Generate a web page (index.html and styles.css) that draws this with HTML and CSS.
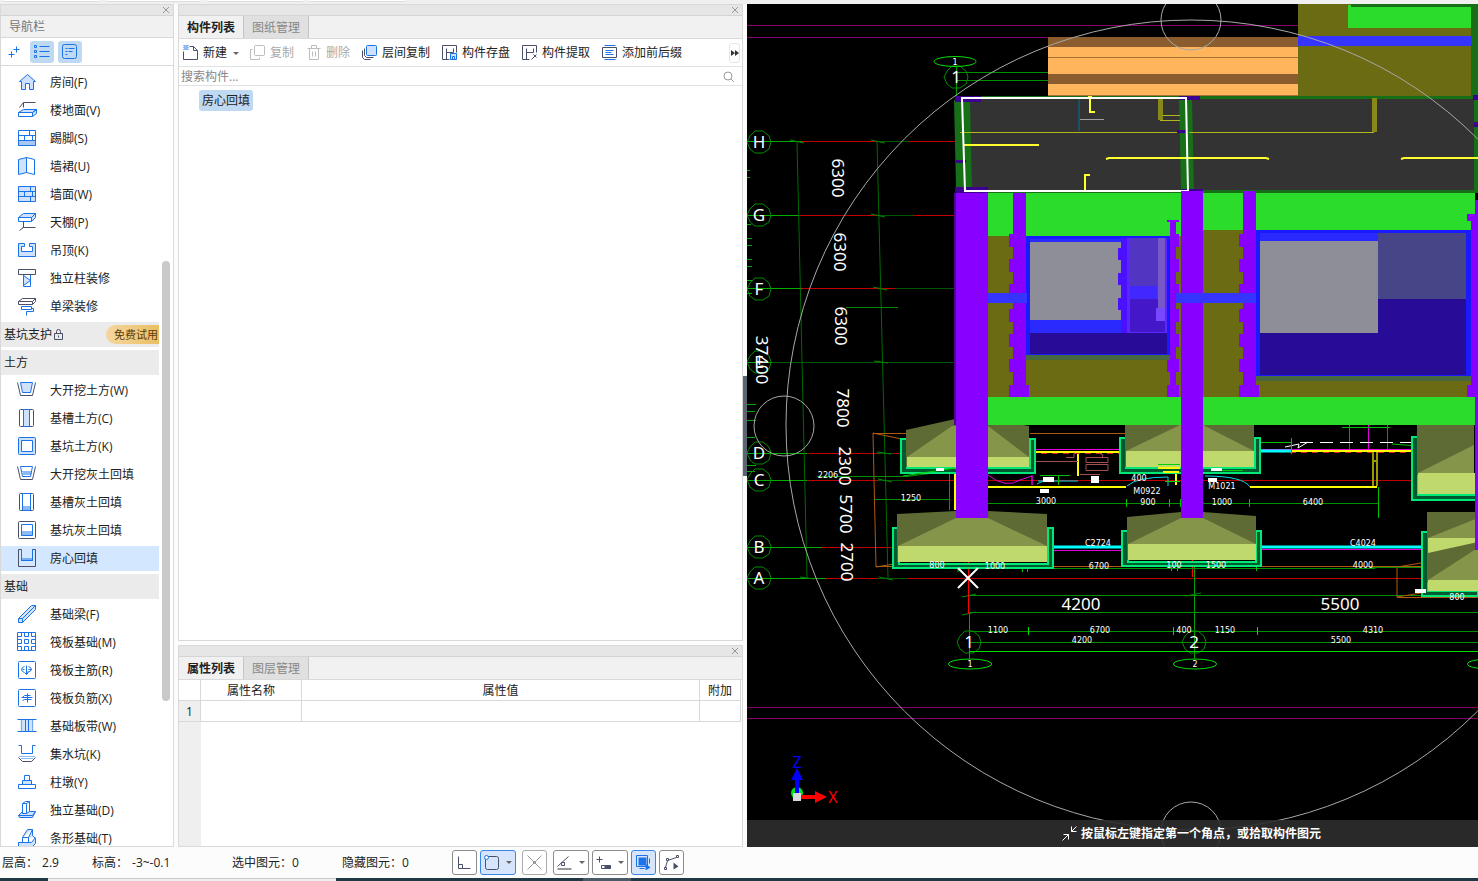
FILE: index.html
```html
<!DOCTYPE html>
<html lang="zh-CN">
<head>
    <meta charset="UTF-8">
    <meta name="viewport" content="width=device-width, initial-scale=1.0">
    <title>房心回填</title>
    <link rel="stylesheet" href="styles.css">
</head>
<body>
    <div class="ribbon-edge">
        <span class="ribbon-group"></span>
        <span class="ribbon-group"></span>
        <span class="ribbon-group"></span>
        <span class="ribbon-group"></span>
    </div>

    <div class="workspace">
        <aside class="panel nav">
            <div class="panel-bar"><button class="close" aria-label="关闭导航栏"><svg width="8" height="8" viewBox="0 0 8 8"><path d="M1 1l6 6M7 1l-6 6"/></svg></button></div>
            <h2 class="nav-title">导航栏</h2>
            <div class="nav-tools">
                <button class="nav-tool" aria-label="展开"><svg width="16" height="16" viewBox="-.5 -.5 16 16"><path class="b" d="M10 2v6M7 5h6M5 7v6M2 10h6"/></svg></button>
                <button class="nav-tool on" aria-label="列表"><svg width="18" height="16" viewBox="-.5 -.5 18 16"><path class="b" d="M6 2h10M6 7h10M6 12h10"/><path class="b" d="M1 1h2v2H1zM1 6h2v2H1zM1 11h2v2H1z"/></svg></button>
                <button class="nav-tool on" aria-label="详情"><svg width="16" height="16" viewBox="-.5 -.5 16 16"><rect class="b" x="0" y="0" width="14" height="14" rx="2"/><path class="b" d="M3 4h2M6 4h6M3 7h2M6 7h4M3 10h2"/></svg></button>
            </div>
            <div class="nav-body">
                <ul class="nav-list">
                    <li><button class="nav-item"><svg viewBox="-.5 -.5 20 21"><path class="bf" d="M2 9l8-7 8 7h-2v8h-4v-6H8v6H4V9z"/></svg>房间(F)</button></li>
                    <li><button class="nav-item"><svg viewBox="-.5 -.5 20 21"><path class="d" d="M2 7l4-5h12M6 2v5"/><path class="bf" d="M1 12l5-3h13l-4 3zM15 12l4-3v4l-4 3z"/><path class="bw" d="M1 12h14v4H1z"/></svg>楼地面(V)</button></li>
                    <li><button class="nav-item"><svg viewBox="-.5 -.5 20 21"><path class="bw" d="M1 2h17v15H1z"/><path class="bd" d="M1 12h17v5H1z"/><path class="b" d="M1 7h17M12 2v5M7 7v5M15 7v5"/></svg>踢脚(S)</button></li>
                    <li><button class="nav-item"><svg viewBox="-.5 -.5 20 21"><path class="bf" d="M1 3l8-2v15l-8 2z"/><path class="bw" d="M9 1l8 2v15l-8-2z"/></svg>墙裙(U)</button></li>
                    <li><button class="nav-item"><svg viewBox="-.5 -.5 20 21"><path class="bf" d="M1 2h17v15H1z"/><path class="b" d="M1 7h17M1 12h17M13 2v5M7 7v5M15 7v5M13 12v5"/></svg>墙面(W)</button></li>
                    <li><button class="nav-item"><svg viewBox="-.5 -.5 20 21"><path class="bf" d="M1 5l5-4h12l-4 4zM14 5l4-4v4l-4 4z"/><path class="bw" d="M1 5h13v4H1z"/><path class="d" d="M6 9v6l-4 3M5 15h13"/></svg>天棚(P)</button></li>
                    <li><button class="nav-item"><svg viewBox="-.5 -.5 20 21"><path class="bf" d="M1 3h6v3H4v5h11V6h-3V3h6v13H1z"/></svg>吊顶(K)</button></li>
                    <li><button class="nav-item"><svg viewBox="-.5 -.5 20 21"><path class="b" d="M6 6h7v12H6z"/><path class="bf" d="M6 7l7 5-7 5z"/><path class="d" d="M1 1h17v5H1z"/></svg>独立柱装修</button></li>
                    <li><button class="nav-item"><svg viewBox="-.5 -.5 20 21"><path class="d" d="M1 5l4-3h13l-3 3zM1 5v3h14l3-3V2M15 5v3"/><path class="b" d="M4 10h10v3H4zM14 12h2v3H9v4"/></svg>单梁装修</button></li>
                    <li class="nav-group">基坑支护<svg width="12" height="14" viewBox="-.5 -.5 12 14"><path class="d" d="M2 5h8v6H2zM4 5V3q0-2 2-2t2 2v2M6 7v2"/></svg><a class="trial" href="#trial">免费试用</a></li>
                    <li class="nav-group">土方</li>
                    <li><button class="nav-item"><svg viewBox="-.5 -.5 20 21"><path class="d" d="M0 2l3 13h12l3-13"/><path class="bf" d="M3 2h12l-2 10H5z"/></svg>大开挖土方(W)</button></li>
                    <li><button class="nav-item"><svg viewBox="-.5 -.5 20 21"><rect class="d" x="2" y="1" width="14" height="17" rx="1"/><path class="bf" d="M6 1h6v17H6z"/></svg>基槽土方(C)</button></li>
                    <li><button class="nav-item"><svg viewBox="-.5 -.5 20 21"><rect class="bf" x="1" y="1" width="17" height="17" rx="1"/><path class="bw" d="M4 4h11v11H4z"/></svg>基坑土方(K)</button></li>
                    <li><button class="nav-item"><svg viewBox="-.5 -.5 20 21"><path class="d" d="M0 2l3 13h12l3-13"/><path class="b" d="M3 2h12l-2 10H5z"/><path class="dots" d="M5 7h9M6 8h8M5 9h9M6 10h7"/></svg>大开挖灰土回填</button></li>
                    <li><button class="nav-item"><svg viewBox="-.5 -.5 20 21"><rect class="d" x="2" y="1" width="14" height="17" rx="1"/><path class="b" d="M5 1h8v17H5z"/><path class="dots" d="M6 14h7M5 15h8M6 16h7M5 17h8"/></svg>基槽灰土回填</button></li>
                    <li><button class="nav-item"><svg viewBox="-.5 -.5 20 21"><rect class="d" x="1" y="1" width="17" height="17" rx="1"/><path class="b" d="M4 4h11v11H4z"/><path class="dots" d="M5 11h10M4 12h11M5 13h10M4 14h11"/></svg>基坑灰土回填</button></li>
                    <li><button class="nav-item selected"><svg viewBox="-.5 -.5 20 21"><path class="d" d="M1 1h3v11h11V1h3v17H1z"/><path class="b" d="M4 1v11h11V1"/><path class="dots" d="M5 10h10M4 11h11"/></svg>房心回填</button></li>
                    <li class="nav-group">基础</li>
                    <li><button class="nav-item"><svg viewBox="-.5 -.5 20 21"><path class="bf" d="M1 14L14 1h4v4L5 18H1z"/><path class="b" d="M1 14h4v4M5 14L18 1"/></svg>基础梁(F)</button></li>
                    <li><button class="nav-item"><svg viewBox="-.5 -.5 20 21"><path class="bw" d="M0 0h18v18H0z"/><path class="b" d="M0 4h4V0M7 0v4h4V0M14 0v4h4M0 7h4v4H0M7 7h4v4H7zM18 7h-4v4h4M0 14h4v4M7 18v-4h4v4M14 18v-4h4"/></svg>筏板基础(M)</button></li>
                    <li><button class="nav-item"><svg viewBox="-.5 -.5 20 21"><rect class="b" x="1" y="1" width="17" height="17" rx="1"/><path class="b" d="M9 5v9M7 6q-3 1-3 3t3 3M11 6q3 1 3 3t-5 3M5 9h2M11 9h3M7 12l2 2 2-2"/></svg>筏板主筋(R)</button></li>
                    <li><button class="nav-item"><svg viewBox="-.5 -.5 20 21"><rect class="b" x="1" y="1" width="17" height="17" rx="1"/><path class="b" d="M10 5v9M5 9l2-2h6M4 9h11M5 12l2-1h7"/></svg>筏板负筋(X)</button></li>
                    <li><button class="nav-item"><svg viewBox="-.5 -.5 20 21"><path class="fill" d="M3 3h13v12H3z"/><path class="b" d="M0 3h19M0 15h19M8 3v12M11 3v12"/><path class="dots" d="M4 3v12M15 3v12"/></svg>基础板带(W)</button></li>
                    <li><button class="nav-item"><svg viewBox="-.5 -.5 20 21"><path class="b" d="M1 1h3v8h11V1h3"/><path class="dots" d="M2 12h15M4 14h12"/><path class="d" d="M1 13l4 4h9l4-4"/></svg>集水坑(K)</button></li>
                    <li><button class="nav-item"><svg viewBox="-.5 -.5 20 21"><path class="bw" d="M7 3h5v5H7zM1 12h17v4H1z"/><path class="bf" d="M5 8h9v4H5z"/></svg>柱墩(Y)</button></li>
                    <li><button class="nav-item"><svg viewBox="-.5 -.5 20 21"><path class="bf" d="M1 15l4-4h13l-3 6H2zM15 15l3-4M1 15h14"/><path class="bw" d="M5 3l3-2h4v10l-3 2H5zM5 3h4v10M9 3l3-2"/></svg>独立基础(D)</button></li>
                    <li><button class="nav-item"><svg viewBox="-.5 -.5 20 21"><path class="bf" d="M5 9l5-8h5v6l3 3v5l-4 4H1v-5h13l4-5M5 9h6l4-8M5 9v5M11 9v5"/></svg>条形基础(T)</button></li>
                </ul>
                <div class="scroll-thumb"></div>
            </div>
        </aside>

        <main class="center">
            <section class="panel components">
                <div class="panel-bar"><button class="close" aria-label="关闭构件列表"><svg width="8" height="8" viewBox="0 0 8 8"><path d="M1 1l6 6M7 1l-6 6"/></svg></button></div>
                <div class="tabs">
                    <button class="tab active">构件列表</button>
                    <button class="tab">图纸管理</button>
                </div>
                <div class="toolbar">
                    <button class="tool"><svg width="16" height="16" viewBox="-.5 -.5 16 16"><path class="d" d="M0 6v8h14V5l-4-4H6M10 1v4h4"/><path class="dots" d="M0 0h5M1 1h4M0 2h5M1 3h4M0 4h5"/></svg>新建<span class="caret"></span></button>
                    <button class="tool" disabled><svg width="16" height="16" viewBox="-.5 -.5 16 16"><rect class="g" x="4" y="0" width="10" height="10" rx="1"/><path class="g" d="M2 4H0v10h9v-2"/></svg>复制</button>
                    <button class="tool" disabled><svg width="16" height="16" viewBox="-.5 -.5 16 16"><path class="g" d="M1 3h13M5 3V0h5v3M3 3v11h9V3M6 6v5M9 6v5"/></svg>删除</button>
                    <button class="tool"><svg width="16" height="16" viewBox="-.5 -.5 16 16"><path class="d" d="M2 3v7l2 2h7M0 5v7l2 2h6"/><rect class="bf" x="4" y="0" width="10" height="10" rx="1"/></svg>层间复制</button>
                    <button class="tool"><svg width="16" height="16" viewBox="-.5 -.5 16 16"><path class="d" d="M7 14H0V0h14v7M4 14V3M4 7h7M11 3v4"/><path class="bf" d="M8 8h6v6H8zM10 11h2v3h-2z"/></svg>构件存盘</button>
                    <button class="tool"><svg width="16" height="16" viewBox="-.5 -.5 16 16"><path class="d" d="M7 14H0V0h14v7M4 14V3M4 7h7M11 3v4M9 14l5-5M11 9l3 3"/></svg>构件提取</button>
                    <button class="tool"><svg width="16" height="16" viewBox="-.5 -.5 16 16"><path class="d" d="M0 2h14v10H0z"/><path class="b" d="M2 0h11M2 14h11M3 5h8M3 7h6M3 9h8"/></svg>添加前后缀</button>
                    <button class="more" aria-label="更多"><svg width="8" height="6" viewBox="0 0 8 6"><path d="M0 0l4 3-4 3zM4 0l4 3-4 3z"/></svg></button>
                </div>
                <div class="search">
                    <input type="text" aria-label="搜索构件" placeholder="搜索构件...">
                    <svg width="12" height="12" viewBox="0 0 12 12"><circle cx="5" cy="5" r="4"/><path d="M8 8l3 3"/></svg>
                </div>
                <div class="tree"><button class="tree-item">房心回填</button></div>
            </section>

            <section class="panel properties">
                <div class="panel-bar"><button class="close" aria-label="关闭属性列表"><svg width="8" height="8" viewBox="0 0 8 8"><path d="M1 1l6 6M7 1l-6 6"/></svg></button></div>
                <div class="tabs">
                    <button class="tab active">属性列表</button>
                    <button class="tab">图层管理</button>
                </div>
                <div class="sheet">
                    <table>
                        <thead>
                            <tr><th class="col-no"></th><th class="col-name">属性名称</th><th>属性值</th><th class="col-extra">附加</th></tr>
                        </thead>
                        <tbody>
                            <tr><td class="col-no">1</td><td></td><td></td><td></td></tr>
                        </tbody>
                    </table>
                </div>
            </section>
        </main>

        <div class="splitter"><span class="splitter-grip"></span></div>

        <section class="viewport">
            <svg class="scene" viewBox="747 4 731 843" preserveAspectRatio="xMidYMid slice">
                <!-- site boundary -->
                <path stroke="#86006a" d="M747 25.500h551M747 37.500h301M747 707.500h731M747 718.500h731"/>

                <!-- axes A-H -->
                <path stroke="#c00000" d="M798 141.500h157M798 215.500h157M798 288.500h157M805 453.500h98M805 480.500h673M820 547.500h80M826 578.500h652"/>
                <path stroke="#005500" d="M880 141.500h30M880 215.500h34M895 288.500h60M770 362.500h185M878 453.500h16M878 480.500h26M878 578.500h30"/>
                <path stroke="#00b000" d="M747 141.500h55M747 215.500h52M747 288.500h55M747 362.500h25M747 453.500h60M747 480.500h60M747 547.500h75M747 578.500h79"/>
                <path stroke="#006a00" d="M797 142l10 436M877 142l11 436"/>
                <path stroke="#008800" d="M790 140l14 3M871 140l14 3M871 214l14 3M873 287l14 3M874 361l14 2M877 452l14 2M878 479l14 3M879 577l14 3M800 577l14 2M846 307.500h52"/>
                <path stroke="#00b000" d="M747 170.500h3M747 177.500h3M747 224.500h4M747 238.500h5M747 245.500h5M747 259.500h5M747 266.500h5M747 280.500h5M747 293.500h5M747 404.500h9M747 411.500h8M747 420.500h9M747 437.500h8M747 465.500h9M747 471.500h8"/>
                <g fill="none" stroke="#008c00">
                    <path id="bubble" d="M755 131l8 0 6 5 2 6-2 7-6 4-8 0-5-4-3-7 3-6z"/>
                    <use href="#bubble" y="73"/><use href="#bubble" y="147"/><use href="#bubble" y="220"/>
                    <use href="#bubble" y="311"/><use href="#bubble" y="338"/><use href="#bubble" y="405"/><use href="#bubble" y="436"/>
                    <use href="#bubble" x="197" y="-65"/><use href="#bubble" x="210" y="500"/><use href="#bubble" x="435" y="500"/>
                </g>

                <!-- axes 1 and 2 -->
                <g fill="none" stroke="#00e000">
                    <ellipse cx="955" cy="61.500" rx="21" ry="5"/><ellipse cx="970" cy="664" rx="21.500" ry="5"/>
                    <ellipse cx="1195" cy="664" rx="21.500" ry="5"/><ellipse cx="1489" cy="664" rx="21.500" ry="5"/>
                </g>
                <path stroke="#00a000" d="M956.500 66v30M969.500 614v45M1194.500 565v94"/>
                <path stroke="#009000" d="M957 72.500h91M957 80.500h91M968 595.500h510M969 612.500h509M969 631.500h509M969 642.500h509M962 597l14-3M962 615l14-3M1186 596l15-3"/>
                <path stroke="#00e000" d="M969 651.500h509M1028.500 627v8M1173.500 627v8M1257.500 627v8"/>
                <path stroke="#ff0000" d="M968.500 560v54M1192.500 560v17"/>
                <g class="axis">
                    <text x="759" y="148">H</text><text x="759" y="221">G</text><text x="759" y="295">F</text><text x="759" y="368">E</text>
                    <text x="759" y="459">D</text><text x="759" y="486">C</text><text x="759" y="553">B</text><text x="759" y="584">A</text>
                    <text x="956" y="83">1</text><text x="969" y="648">1</text><text x="1194" y="648">2</text>
                    <text x="1081" y="610">4200</text><text x="1340" y="610">5500</text>
                    <text transform="translate(832 178) rotate(90)">6300</text>
                    <text transform="translate(834 252) rotate(90)">6300</text>
                    <text transform="translate(835 326) rotate(90)">6300</text>
                    <text transform="translate(837 408) rotate(90)">7800</text>
                    <text transform="translate(839 466) rotate(90)">2300</text>
                    <text transform="translate(840 514) rotate(90)">5700</text>
                    <text transform="translate(841 562) rotate(90)">2700</text>
                    <text transform="translate(756 360) rotate(90)">37400</text>
                </g>

                <!-- foundation plan linework -->
                <g fill="none">
                    <path stroke="#b05a10" d="M906 440l-33-7 3 134 18-3M873 433.500h34M1030 433.500h95M876 566.500h545M1421 563l-24 4 0 30 24-4M1397 597.500h81"/>
                    <path stroke="#009000" d="M874 499.500h75M817 476.500h90l45-6M988 503.500h390M1370 567.500h57M950 568.500h425"/>
                    <path stroke="#ffff00" stroke-width="2" d="M988 487h138M1250 487h127M1030 452h90M1290 451h128M1078 453v23M1158 468h18v17M1165 471h13M955 470v40"/>
                    <path stroke="#d02020" stroke-dasharray="6 5" d="M1030 453.500h90M1290 452.500h128"/>
                    <path stroke="#999900" stroke-width="2" d="M1373 452v34M1377 452v34M1372 461h5"/>
                    <path stroke="#e000e0" d="M949.500 468v42M988 475q18 14 32 5l12-4v9M1032 475v10M1030 449.500h90M1254 449.500h164M1349.500 425v25M1368.500 425v25M1387.500 425v25M1050 550.500h72M1262 549.500h165"/>
                    <path stroke="#00ffff" stroke-width="3" d="M1048 547h75M1262 547h166M1254 451h37"/>
                    <path stroke="#00d8e8" d="M1127 486q10-9 41-9v9M1205 476q38 0 45 11M1038 481h40M1037 484l15-7"/>
                    <path stroke="#a05050" d="M1030 461.500h48M1066 457.500h8v-5M1086 457.500h22v5h-22zM1086 464.500h22v6h-22zM1080 474.500h20M1099 453l4 2-1 3"/>
                    <path stroke="#ffffff" stroke-dasharray="13 7" d="M1300 442.500h118"/>
                    <path stroke="#ffffff" d="M1285 447l14-3-1 4 10-6"/>
                    <path stroke="#00c000" d="M1254 442.500h38M1291.500 438v16M1342 427.500h48M1392 444l26 2M1040 475.500h30M1058.500 475v10M1126.500 499v8M1169.500 499v8M1180.500 499v8M1249.500 499v8M1378.500 487v31M958 568v4M1022.500 564v8M1027.500 564v8M1171.500 564v7M1177.500 564v7M1256.500 564v7"/>
                </g>
                <g fill="#ffffff">
                    <path d="M1043 477h11v5h-11zM1091 476h8v7h-8zM1040 489h9v4h-9zM1208 478h9v4h-9z"/>
                </g>

                <!-- footings -->
                <g stroke="#00e878" stroke-width="2" fill="#005a30">
                    <path d="M901 439h6v29h123v-29h5v34H901zM893 528h6v36h149v-36h5v40H893z"/>
                    <path d="M1120 438h6v30h129v-30h5v35h-140zM1122 531h6v31h128v-31h5v35h-139zM1412 437h6v58h60v5h-66zM1422 532h6v59h50v5h-56z"/>
                </g>
                <g fill="#5e6b35">
                    <path d="M906 430l49-11h33l41 7v41H906zM897 514l59-3h32l59 3v48H897z"/>
                    <path d="M1125 425h129v42h-129zM1127 517l54-5h22l53 4v44h-129zM1417 425h57v50h-57zM1427 512h51v70h-51z"/>
                </g>
                <g fill="#85954a">
                    <path d="M907 457l45-31h36l41 31zM898 546l58-28h32l59 28zM1126 451l54-26h23l51 26zM1128 544l53-26h22l53 26zM1418 473l56-28v28zM1428 538l50-20v20zM1428 580l48-31h2v31z"/>
                </g>
                <g fill="#bfd96c">
                    <path d="M907 457h122v10H907zM898 546h149v16H898zM1126 451h128v16h-128zM1128 544h128v16h-128zM1418 473h58v21h-58zM1428 538h50v4l-50 11zM1428 580h50v11h-50z"/>
                </g>
                <path fill="none" stroke="#00d000" d="M1158 464.500h22M1165 481.500h15M1215 470.500h28M903 476l52-8"/>
                <path fill="none" stroke="#ffff00" stroke-width="2" d="M1158 468h22M1163 472h16"/>
                <path fill="#ffffff" d="M936 468h8v3h-8zM1211 468h11v3h-11zM1415 589h11v4h-11z"/>
                <g class="dim">
                    <text x="1046" y="504">3000</text><text x="1148" y="505">900</text><text x="1222" y="505">1000</text><text x="1313" y="505">6400</text>
                    <text x="937" y="568">800</text><text x="995" y="569">1000</text><text x="1099" y="569">6700</text><text x="1174" y="568">100</text><text x="1216" y="568">1500</text><text x="1363" y="568">4000</text><text x="1457" y="600">800</text>
                    <text x="998" y="633">1100</text><text x="1100" y="633">6700</text><text x="1184" y="633">400</text><text x="1225" y="633">1150</text><text x="1373" y="633">4310</text>
                    <text x="1082" y="643">4200</text><text x="1341" y="643">5500</text>
                    <text x="911" y="501">1250</text><text x="1098" y="546">C2724</text><text x="1363" y="546">C4024</text><text x="1147" y="494">M0922</text><text x="1222" y="489">M1021</text><text x="1139" y="481">400</text><text x="828" y="478">2206</text>
                    <text x="955" y="65">1</text><text x="970" y="667">1</text><text x="1195" y="667">2</text>
                </g>

                <!-- roof -->
                <path fill="#ffb55c" d="M1048 37h250v59h-250z"/>
                <path fill="#8a5c2e" d="M1048 37h250v10h-250zM1048 74h250v10h-250z"/>
                <path stroke="#a87238" d="M1048 57.500h250M1048 95.500h250"/>
                <path fill="#6b6b13" d="M1298 4h173v92h-173z"/>
                <path fill="#2bdc2b" d="M1348 5h123v23h-123z"/>
                <path fill="#3535ff" d="M1298 36h173v10h-173z"/>
                <path fill="#176f17" d="M1471 4h7v92h-7zM1351 4h120v3h-120z"/>

                <!-- slab -->
                <path fill="#333333" d="M956 96h522v97H956z"/>
                <path fill="#176f17" d="M955 96h523v3H955zM954 100h16l2 88h-16zM1179 98h13l2 93h-13zM957 190h521v3H957zM1474 96h4v97h-4z"/>
                <path fill="#3c0090" d="M955 96h26v6h-26zM955 187h33v6h-33zM1179 96h21v4h-21zM1181 189h22v4h-22zM956 160h10v3h-10zM1177 130h9v3h-9zM1474 122h4v5h-4zM1473 95h5v5h-5z"/>
                <path fill="none" stroke="#1d5068" stroke-width="2" d="M1079 99v32"/>
                <path stroke="#a0a0a0" d="M1080 119.500h24"/>
                <path stroke="#b5b51c" d="M960 132.500h217M1189 132.500h185M1158 115.500h22M1160 120.500h20"/>
                <path fill="none" stroke="#88881a" stroke-width="5" d="M1160.500 98v22M1374.500 98v34"/>
                <path fill="none" stroke="#ffff30" stroke-width="2" d="M963 145h76M1106 159l3-1h157l3 1M1401 159l3-1h74M1088 97h4M1095 112h-5v-14M1090 175h-5v16M1082 191h4"/>
                <path fill="none" stroke="#ffffff" stroke-width="2" d="M962 98h224l2 93H965z"/>

                <!-- walls -->
                <path fill="#6b6b13" d="M988 230h487v167H988z"/>
                <path fill="#2bdc2b" d="M988 193h193v43H988zM1203 193h272v37h-272zM988 397h487v28H988z"/>

                <!-- left window -->
                <path fill="#1a1aff" d="M1026 236h144v119h-144z"/>
                <path fill="#2a2aff" d="M1030 239h91v94h-91z"/>
                <path fill="#8e8e98" d="M1030 242h91v78h-91z"/>
                <path fill="#280c98" d="M1030 333h137v21h-137z"/>
                <path fill="#456840" d="M1026 355h144v5h-144z"/>
                <path fill="#4a10ff" d="M1121 238h8v95h-8z"/>
                <path fill="none" stroke="#4a10ff" stroke-width="4" stroke-dasharray="12 13" d="M1120 248v72"/>
                <path fill="#5a28ff" d="M1127 238h40v95h-40z"/>
                <path fill="#5235c0" d="M1130 238h36v48h-36z"/>
                <path fill="#4028ff" d="M1130 286h27v13h-27z"/>
                <path fill="#4418c8" d="M1130 299h35v33h-35z"/>
                <path fill="#7858c8" d="M1158 238h7v70h-7z"/>
                <path fill="#7748ff" d="M1156 308h9v13h-9z"/>

                <!-- right window -->
                <path fill="#1a1aff" d="M1256 230h215v146h-215z"/>
                <path fill="#280c98" d="M1260 233h206v142h-206z"/>
                <path fill="#2a2aff" d="M1260 233h118v8h-118z"/>
                <path fill="#8e8e98" d="M1260 241h118v92h-118z"/>
                <path fill="#454588" d="M1378 233h88v66h-88z"/>
                <path fill="#456840" d="M1256 376h215v5h-215z"/>

                <!-- columns -->
                <path fill="#8800ff" d="M956 193h32v325h-32zM1181 191h22v327h-22zM1013 193h13v204h-13zM1243 191h13v206h-13zM1170 220h6v177h-6zM1471 218h5v179h-5z"/>
                <path fill="#8800ff" d="M1167 220h12v2h-12zM1167 360h12v12h-12zM1167 385h12v12h-12zM1009 385h20v12h-20zM1239 385h20v12h-20zM1467 214h10v7h-10zM1467 385h10v12h-10zM1475 200h3v350h-3z"/>
                <path stroke="#8800ff" stroke-width="4" stroke-dasharray="13 12" d="M1011 234v150M1241 234v150M1177 234v150"/>
                <path stroke="#4b0a90" stroke-width="2" d="M955 193v232"/>
                <path fill="#3535ff" d="M988 293h39v10h-39zM1176 293h80v10h-80z"/>

                <!-- orbit -->
                <g fill="none" stroke="#a8a8a8">
                    <circle cx="1191" cy="425" r="405"/>
                    <circle cx="784" cy="426" r="30"/>
                    <circle cx="1191" cy="20" r="30"/>
                    <circle cx="1191" cy="832" r="30"/>
                </g>
                <path stroke="#ffffff" stroke-width="2" d="M958 568l20 20M978 568l-20 20"/>

                <!-- axis gizmo -->
                <circle cx="797" cy="793" r="6" fill="#00e020"/>
                <path fill="#0000ff" d="M795 795v-15h-4l6-12 6 12h-4v15z"/>
                <path fill="#ff0000" d="M799 795h16v-4l12 6-12 6v-4h-16z"/>
                <path fill="#d8d8d8" d="M793 793h8v8h-8z"/>
                <text class="gizmo" x="797" y="768" fill="#0000ff">Z</text>
                <text class="gizmo" x="833" y="803" fill="#ff0000">X</text>
            </svg>
            <p class="hint"><svg width="16" height="16" viewBox="-.5 -.5 16 16"><path d="M14 0l-5 5M9 0v5h5M0 14l6-6M1 8h5v5"/></svg>按鼠标左键指定第一个角点，或拾取构件图元</p>
        </section>
    </div>

    <footer class="status">
        <dl class="stats">
            <div><dt>层高：</dt><dd>2.9</dd></div>
            <div><dt>标高：</dt><dd>-3~-0.1</dd></div>
            <div><dt>选中图元：</dt><dd>0</dd></div>
            <div><dt>隐藏图元：</dt><dd>0</dd></div>
        </dl>
        <div class="modes">
            <button class="mode" aria-label="正交"><svg width="15" height="15" viewBox="-.5 -.5 15 15"><path class="d" d="M1 1v12h12M1 9h4v4"/></svg></button>
            <button class="mode wide on spaced" aria-label="矩形"><svg width="15" height="15" viewBox="-.5 -.5 15 15"><rect class="d" x="1" y="1" width="13" height="13" rx="2"/><circle class="bw" cx="2" cy="2" r="2"/></svg><span class="caret"></span></button>
            <button class="mode muted spaced" aria-label="交点"><svg width="15" height="15" viewBox="-.5 -.5 15 15"><path class="g2" d="M0 0l14 14M14 0L0 14M6 6h2v2H6z"/></svg></button>
            <button class="mode wide" aria-label="角度"><svg width="15" height="15" viewBox="-.5 -.5 15 15"><path class="d" d="M0 11L11 1M4 7h3v3H4z"/><path class="g2" d="M0 13h14M0 14h14"/></svg><span class="caret"></span></button>
            <button class="mode wide" aria-label="偏移"><svg width="15" height="15" viewBox="-.5 -.5 15 15"><path class="d" d="M0 4h6M3 1v6M5 10h9v3H5z"/><path fill="#4a5068" d="M8 10h6v3H8z"/></svg><span class="caret"></span></button>
            <button class="mode on" aria-label="叠加"><svg width="15" height="15" viewBox="-.5 -.5 15 15"><path fill="#1a73e8" d="M2 2h8v8H2zM9 8l5 4-5 3z"/><path class="b" d="M0 0h11v11H0zM13 3v5M3 13h5"/></svg></button>
            <button class="mode" aria-label="折线"><svg width="15" height="15" viewBox="-.5 -.5 15 15"><path class="d" d="M1 12l2-7 9-3M0 12h2v2H0zM12 0h2v2h-2zM2 3h2v2H2z"/><path fill="#4a5068" d="M9 7l5 4-5 3z"/></svg></button>
        </div>
    </footer>
    <div class="taskbar"><span class="task-open"></span><span class="task-active"></span></div>
</body>
</html>
```
FILE: styles.css
```css
* {
    box-sizing: border-box;
}
body {
    margin: 0;
    height: 100vh;
    display: flex;
    flex-direction: column;
    overflow: hidden;
    background-color: #fcfcfc;
    color: #222;
    font-family: "Open Sans", "Noto Sans CJK SC", sans-serif;
    font-size: 12px;
    line-height: 16px;
}
button {
    margin: 0;
    padding: 0;
    border: none;
    background: none;
    color: inherit;
    font: inherit;
    cursor: pointer;
}
svg {
    flex: none;
    display: block;
}

/* icon strokes */
.b, .bf, .bw, .bd, .d, .g, .g2, .dots {
    fill: none;
    stroke: #1a73e8;
    stroke-width: 1;
}
.bf, .fill {
    fill: #cfe1fb;
}
.bd {
    fill: #a9c8f5;
}
.bw {
    fill: #fff;
}
.d {
    stroke: #4a5068;
}
.g {
    stroke: #bdbdbd;
}
.g2 {
    stroke: #999;
}
.dots {
    stroke-dasharray: 1 1;
}

.ribbon-edge {
    flex: none;
    height: 4px;
    padding-left: 3px;
    display: flex;
    gap: 5px;
    background-color: #f0f0f0;
}
.ribbon-group {
    width: 97px;
    height: 2px;
    background-color: #fff;
    border-bottom: 1px solid #ddd;
    border-radius: 0 0 3px 3px;
}
.workspace {
    flex: 1;
    min-height: 0;
    display: flex;
}
.panel {
    display: flex;
    flex-direction: column;
    border: 1px solid #d9d9d9;
    background-color: #fff;
}
.panel-bar {
    flex: none;
    height: 11px;
    padding-right: 3px;
    display: flex;
    align-items: center;
    justify-content: flex-end;
    background-color: #e6e6e6;
    border-bottom: 1px solid #d4d4d4;
}
.close svg {
    fill: none;
    stroke: #999;
}

/* navigation */
.nav {
    flex: none;
    width: 174px;
    margin-right: 4px;
}
.nav-title {
    flex: none;
    height: 22px;
    margin: 0;
    padding-left: 8px;
    font-size: 12px;
    font-weight: normal;
    line-height: 22px;
    color: #777;
    background-color: #f1f1f1;
    border-bottom: 1px solid #d9d9d9;
}
.nav-tools {
    flex: none;
    height: 28px;
    padding-left: 1px;
    display: flex;
    align-items: center;
    gap: 4px;
    border-bottom: 1px solid #d9d9d9;
}
.nav-tool {
    width: 24px;
    height: 22px;
    display: flex;
    align-items: center;
    justify-content: center;
    border-radius: 3px;
}
.nav-tool.on {
    background-color: #c0d9f2;
}
.nav-body {
    flex: 1;
    min-height: 0;
    position: relative;
    overflow: hidden;
}
.nav-list {
    list-style: none;
    margin: 0;
    padding: 4px 14px 0 0;
    display: flex;
    flex-direction: column;
    gap: 3px;
}
.nav-item {
    width: 100%;
    height: 25px;
    padding-left: 16px;
    display: flex;
    align-items: center;
    gap: 13px;
    white-space: nowrap;
}
.nav-item svg {
    width: 20px;
    height: 21px;
}
.nav-item.selected {
    background-color: #d3e7ff;
}
.nav-group {
    height: 25px;
    padding-left: 3px;
    display: flex;
    align-items: center;
    background-color: #ebebeb;
}
.nav-list li:not(.nav-group) {
    height: 25px;
}
.trial {
    margin-left: auto;
    height: 19px;
    padding: 0 1px 0 8px;
    font-size: 11px;
    line-height: 19px;
    white-space: nowrap;
    color: #5c3a0a;
    text-decoration: none;
    background: linear-gradient(90deg, #f5d6a0, #eabf62);
    border-radius: 10px 0 0 10px;
}
.scroll-thumb {
    position: absolute;
    top: 195px;
    right: 3px;
    width: 8px;
    height: 440px;
    border-radius: 4px;
    background-color: #c9c9c9;
}

/* centre column */
.center {
    flex: none;
    width: 565px;
    display: flex;
    flex-direction: column;
    gap: 4px;
}
.components {
    flex: 1;
    min-height: 0;
}
.properties {
    flex: none;
    height: 202px;
}
.tabs {
    flex: none;
    height: 23px;
    display: flex;
    background-color: #f1f1f1;
    border-bottom: 1px solid #d9d9d9;
}
.tab {
    width: 65px;
    padding-top: 1px;
    color: #888;
    background-color: #e0e0e0;
    border-right: 1px solid #c5c5c5;
}
.tab.active {
    font-weight: bold;
    color: #222;
    background-color: #f1f1f1;
}
.toolbar {
    flex: none;
    height: 28px;
    padding: 1px 2px 0 4px;
    display: flex;
    align-items: center;
    gap: 12px;
    border-bottom: 1px solid #e2e2e2;
}
.tool {
    display: flex;
    align-items: center;
    gap: 4px;
    white-space: nowrap;
}
.tool:disabled {
    color: #aaa;
}
.caret {
    margin-left: 2px;
    border: 3px solid transparent;
    border-top: 3px solid #666;
    border-bottom: none;
}
.tool .caret {
    margin-right: -1px;
}
.more {
    margin-left: auto;
    width: 11px;
    height: 20px;
    display: flex;
    align-items: center;
    justify-content: center;
    border: 1px solid #e5e5e5;
    border-radius: 3px;
}
.more svg {
    fill: #333;
}
.search {
    flex: none;
    height: 19px;
    padding: 1px 7px 0 2px;
    display: flex;
    align-items: center;
    border-bottom: 1px solid #e2e2e2;
}
.search input {
    flex: 1;
    padding: 0;
    border: none;
    outline: none;
    background: none;
    font: inherit;
}
.search input::placeholder {
    color: #888;
}
.search svg {
    fill: none;
    stroke: #999;
}
.tree {
    padding: 4px 20px;
}
.tree-item {
    height: 21px;
    padding: 0 3px;
    border-radius: 3px;
    background-color: #c0d9f2;
}
.sheet {
    flex: 1;
    padding-right: 1px;
    background: linear-gradient(90deg, #efefef 22px, #fff 22px);
}
.sheet table {
    width: 100%;
    table-layout: fixed;
    border-collapse: separate;
    border-spacing: 0;
}
.sheet th, .sheet td {
    height: 21px;
    padding: 1px 0 0;
    font-weight: normal;
    text-align: center;
    background-color: #fff;
    border-right: 1px solid #d9d9d9;
    border-bottom: 1px solid #d9d9d9;
}
.sheet td.col-no {
    background-color: #efefef;
}
.col-no {
    width: 22px;
}
.col-name {
    width: 101px;
}
.col-extra {
    width: 41px;
}
.splitter {
    flex: none;
    width: 4px;
    padding-top: 372px;
}
.splitter-grip {
    display: block;
    height: 100px;
    background-color: #5c6673;
}

/* model view */
.viewport {
    flex: 1;
    min-width: 0;
    position: relative;
    overflow: hidden;
    background-color: #000;
}
.scene {
    width: 100%;
    height: 100%;
}
.axis text {
    font-family: "Noto Sans", sans-serif;
    font-size: 17px;
    text-anchor: middle;
    fill: #fff;
}
.dim text {
    font-family: "DejaVu Sans", sans-serif;
    font-size: 8px;
    text-anchor: middle;
    fill: #fff;
}
.gizmo {
    font-family: "Noto Sans", sans-serif;
    font-size: 16px;
    text-anchor: middle;
}
.hint {
    position: absolute;
    left: 0;
    right: 0;
    bottom: 0;
    height: 27px;
    margin: 0;
    padding-left: 158px;
    display: flex;
    align-items: center;
    justify-content: center;
    gap: 3px;
    font-weight: bold;
    color: #fff;
    background-color: rgba(46, 46, 46, 0.9);
}
.hint svg {
    fill: none;
    stroke: #fff;
}

/* status bar */
.status {
    flex: none;
    height: 31px;
    padding-left: 2px;
    display: flex;
    align-items: center;
}
.stats {
    margin: 0;
    display: grid;
    grid-template-columns: 90px 140px 110px 110px;
}
.stats div {
    display: flex;
    white-space: nowrap;
}
.stats dd {
    margin: 0 0 0 4px;
}
.stats div:nth-child(n+3) dd {
    margin-left: 0;
}
.modes {
    display: flex;
    gap: 3px;
}
.mode {
    width: 25px;
    height: 25px;
    display: flex;
    align-items: center;
    justify-content: center;
    border: 1px solid #8c8c8c;
    border-radius: 3px;
    background-color: #fff;
}
.mode.wide {
    width: 36px;
    gap: 5px;
}
.mode.on {
    border-color: #3a86e8;
    background-color: #d6e5fb;
}
.mode.muted {
    border-color: #aaa;
}
.mode.spaced {
    margin-right: 3px;
}
.taskbar {
    flex: none;
    height: 3px;
    padding-left: 48px;
    display: flex;
    background-color: #203844;
}
.task-open {
    width: 288px;
    background-color: #eee;
    border-top: 1px solid #ccc;
}
.task-active {
    width: 48px;
    margin-left: 247px;
    background-color: #4a5a66;
}
```
